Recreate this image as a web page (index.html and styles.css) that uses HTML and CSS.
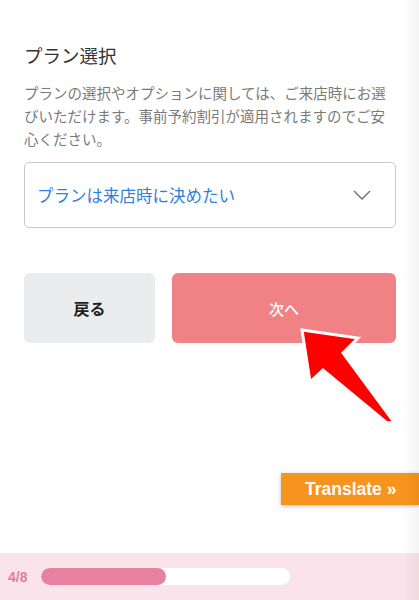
FILE: index.html
```html
<!DOCTYPE html>
<html lang="ja">
<head>
<meta charset="utf-8">
<title>プラン選択</title>
<link rel="stylesheet" href="styles.css">
</head>
<body>
<main class="page">
  <section class="plan">
    <h2 class="plan-title">プラン選択</h2>
    <p class="plan-desc">プランの選択やオプションに関しては、ご来店時にお選びいただけます。事前予約割引が適用されますのでご安心ください。</p>
    <div class="select">
      <span class="select-value">プランは来店時に決めたい</span>
      <svg class="select-chevron" width="18" height="10" viewBox="0 0 18 10"><path d="M1 1 L9 9 L17 1" fill="none" stroke="#6b6b6b" stroke-width="1.3"/></svg>
    </div>
  </section>
  <div class="actions">
    <button class="btn btn-back">戻る</button>
    <button class="btn btn-next">次へ</button>
  </div>
</main>

<svg class="arrow" width="110" height="110" viewBox="0 0 110 110">
  <polygon points="12,10 68,18 53,33 104,102 97,103 33,50 20,62" fill="#ff0000" stroke="#ffffff" stroke-width="3" stroke-linejoin="miter"/>
</svg>

<div class="translate">Translate »</div>

<footer class="progress">
  <span class="progress-count">4/8</span>
  <div class="progress-track"><div class="progress-fill" style="width:50%"></div></div>
</footer>

<div class="edge-shade"></div>
</body>
</html>
```

FILE: styles.css
```css
* { box-sizing: border-box; }
html, body { margin: 0; padding: 0; background: #ffffff; }
body {
  font-family: "Noto Sans CJK JP", "Noto Sans", sans-serif;
  width: 419px;
  height: 600px;
  overflow: hidden;
}
.page {
  padding: 41px 23px 0 24px;
}
.plan-title {
  margin: 0;
  font-size: 18.5px;
  line-height: 28px;
  font-weight: 400;
  color: #333333;
}
.plan-desc {
  margin: 12px 0 0;
  font-size: 14.5px;
  line-height: 23px;
  color: #7a7a7a;
}
.select {
  margin-top: 12px;
  height: 66px;
  border: 1px solid #c9c9c9;
  border-radius: 5px;
  display: flex;
  align-items: center;
  justify-content: space-between;
  padding: 0 24px 0 12px;
}
.select-value {
  font-size: 16.5px;
  color: #2f80d8;
}
.select-chevron { display: block; }
.actions {
  margin-top: 45px;
  display: flex;
  gap: 17px;
}
.btn {
  border: 0;
  height: 70px;
  border-radius: 6px;
  font-family: "Noto Sans CJK JP", sans-serif;
  font-size: 16px;
  padding: 0;
}
.btn-back {
  flex: 0 0 131px;
  background: #ebecee;
  color: #1f1f1f;
  font-weight: 700;
}
.btn-next {
  flex: 1;
  background: #f08184;
  color: #ffffff;
  font-size: 15px;
  font-weight: 500;
}
.arrow {
  position: absolute;
  left: 290px;
  top: 320px;
}
.translate {
  position: absolute;
  left: 281px;
  top: 473px;
  width: 138px;
  height: 32px;
  background: #f7941d;
  color: #ffffff;
  font-family: "Liberation Sans", Arial, sans-serif;
  font-weight: 700;
  font-size: 17.5px;
  line-height: 32px;
  padding-left: 24px;
  white-space: nowrap;
  box-shadow: 0 1px 4px rgba(0,0,0,0.25);
}
.progress {
  position: absolute;
  left: 0;
  top: 553px;
  width: 419px;
  height: 47px;
  background: #fae3ea;
  display: flex;
  align-items: center;
  padding-left: 8px;
  gap: 12px;
}
.progress-count {
  font-family: "Liberation Sans", Arial, sans-serif;
  font-size: 14px;
  font-weight: 700;
  color: #e37d9c;
  width: 21px;
}
.progress-track {
  width: 249px;
  height: 17px;
  background: #ffffff;
  border-radius: 9px;
  overflow: hidden;
}
.progress-fill {
  height: 100%;
  background: #e8819f;
  border-radius: 9px;
}
.edge-shade {
  position: absolute;
  top: 0;
  right: 0;
  width: 16px;
  height: 600px;
  background: linear-gradient(to right, rgba(0,0,0,0), rgba(0,0,0,0.045));
  pointer-events: none;
}
```
